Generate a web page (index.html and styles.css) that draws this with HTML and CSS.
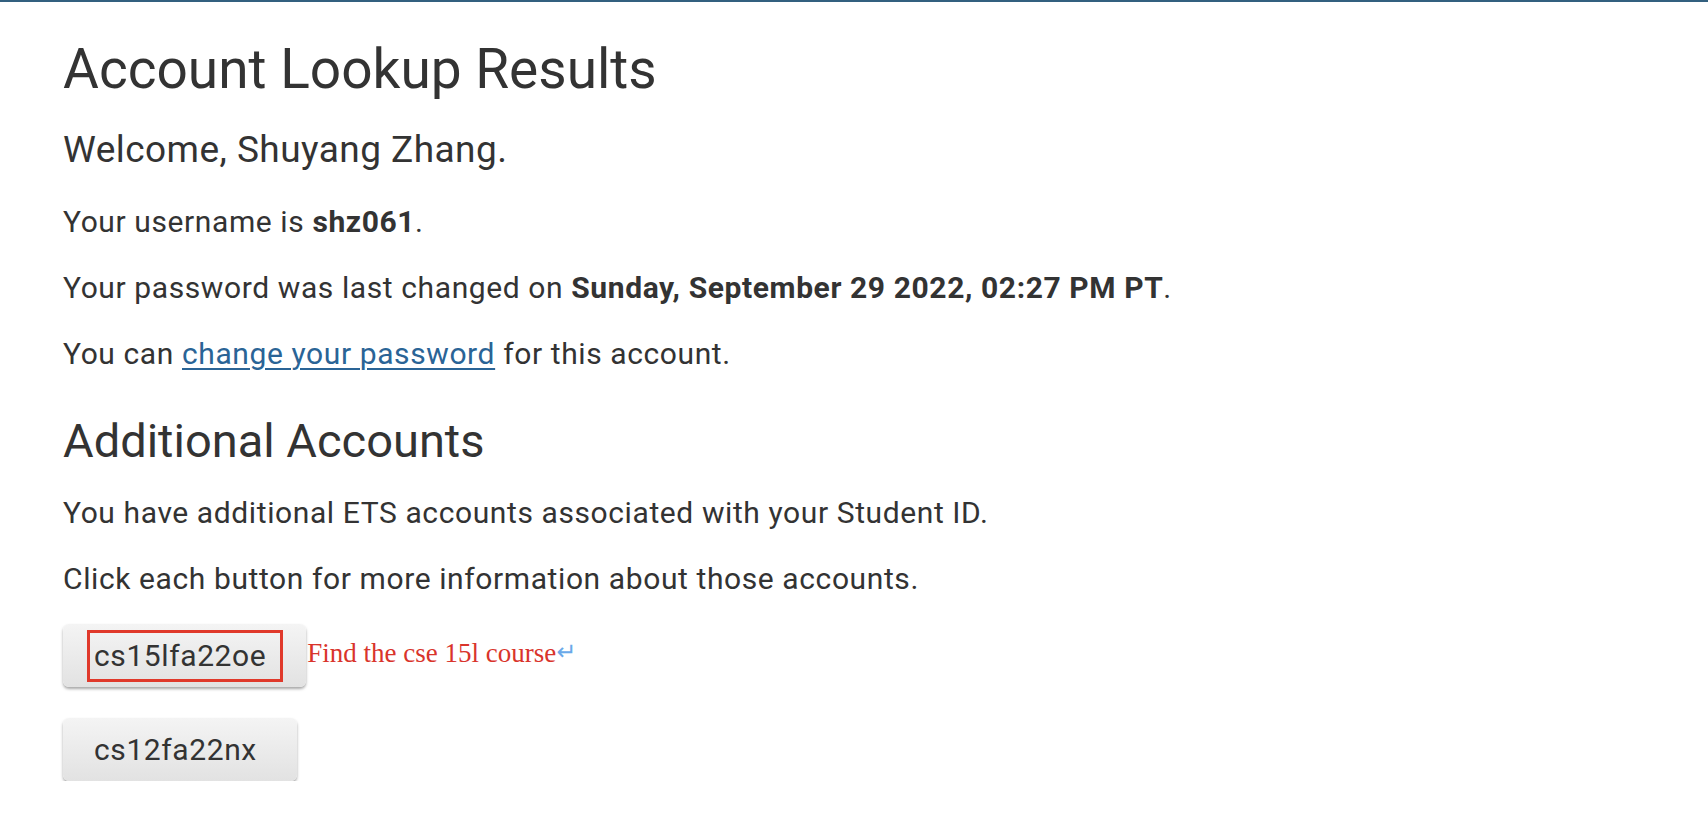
FILE: index.html
```html
<!DOCTYPE html>
<html lang="en">
<head>
<meta charset="utf-8">
<title>Account Lookup Results</title>
<link rel="stylesheet" href="styles.css">
</head>
<body>
<div class="topbar"></div>
<main class="page">
  <h1 class="title">Account Lookup Results</h1>
  <p class="welcome">Welcome, Shuyang Zhang.</p>
  <p class="line">Your username is <strong>shz061</strong>.</p>
  <p class="line">Your password was last changed on <strong>Sunday, September 29 2022, 02:27 PM PT</strong>.</p>
  <p class="line">You can <a href="#" class="link">change your password</a> for this account.</p>
  <h2 class="subtitle">Additional Accounts</h2>
  <p class="line">You have additional ETS accounts associated with your Student ID.</p>
  <p class="line">Click each button for more information about those accounts.</p>
  <div class="accounts">
    <div class="account-row">
      <button class="acct-btn acct-btn--marked"><span class="mark">cs15lfa22oe</span></button>
      <span class="note">Find the cse 15l course<span class="return">↵</span></span>
    </div>
    <div class="account-row">
      <button class="acct-btn">cs12fa22nx</button>
    </div>
  </div>
</main>
</body>
</html>
```
FILE: styles.css
```css
html, body {
  margin: 0;
  padding: 0;
  background: #ffffff;
}
body {
  font-family: Roboto, "Liberation Sans", Arial, sans-serif;
  color: #333333;
}
.topbar {
  height: 2px;
  background: #33607f;
}
.page {
  padding: 0 63px;
}
.title {
  margin: 37px 0 0;
  font-size: 55px;
  line-height: 60px;
  font-weight: 400;
  color: #333333;
}
.welcome {
  margin: 29px 0 0;
  font-size: 37px;
  letter-spacing: 0.45px;
  line-height: 44px;
}
.line {
  margin: 0;
  font-size: 30px;
  letter-spacing: 0.6px;
  line-height: 40px;
  margin-top: 26px;
}
.welcome + .line {
  margin-top: 30px;
}
.line strong {
  font-weight: 700;
}
.link {
  color: #2a6496;
  text-decoration: underline;
  text-decoration-thickness: 2px;
  text-underline-offset: 4px;
}
.subtitle {
  margin: 41px 0 0;
  font-size: 47px;
  line-height: 52px;
  font-weight: 400;
}
.subtitle + .line {
  margin-top: 26px;
}
.accounts {
  margin-top: 25px;
  display: flex;
  flex-direction: column;
  gap: 31px;
}
.account-row {
  display: flex;
  align-items: center;
}
.acct-btn {
  height: 63px;
  padding: 0 40px 0 31px;
  border: none;
  border-radius: 6px;
  background: linear-gradient(#f4f4f4, #e2e2e2);
  box-shadow: 0 2px 3px rgba(0, 0, 0, 0.35);
  font-family: Roboto, "Liberation Sans", Arial, sans-serif;
  font-size: 30px;
  letter-spacing: 0.6px;
  color: #333333;
  cursor: pointer;
}
.acct-btn--marked {
  padding: 0 23px 0 24px;
}
.mark {
  display: inline-block;
  border: 3px solid #e0392b;
  padding: 5px 14px 5px 4px;
  line-height: 36px;
}
.note {
  margin-left: 1px;
  margin-top: -4px;
  font-family: "Liberation Serif", "Times New Roman", serif;
  font-size: 27px;
  color: #d9342b;
}
.return {
  font-family: "DejaVu Sans", sans-serif;
  font-size: 24px;
  color: #6aa9e9;
  vertical-align: 2px;
}
```
